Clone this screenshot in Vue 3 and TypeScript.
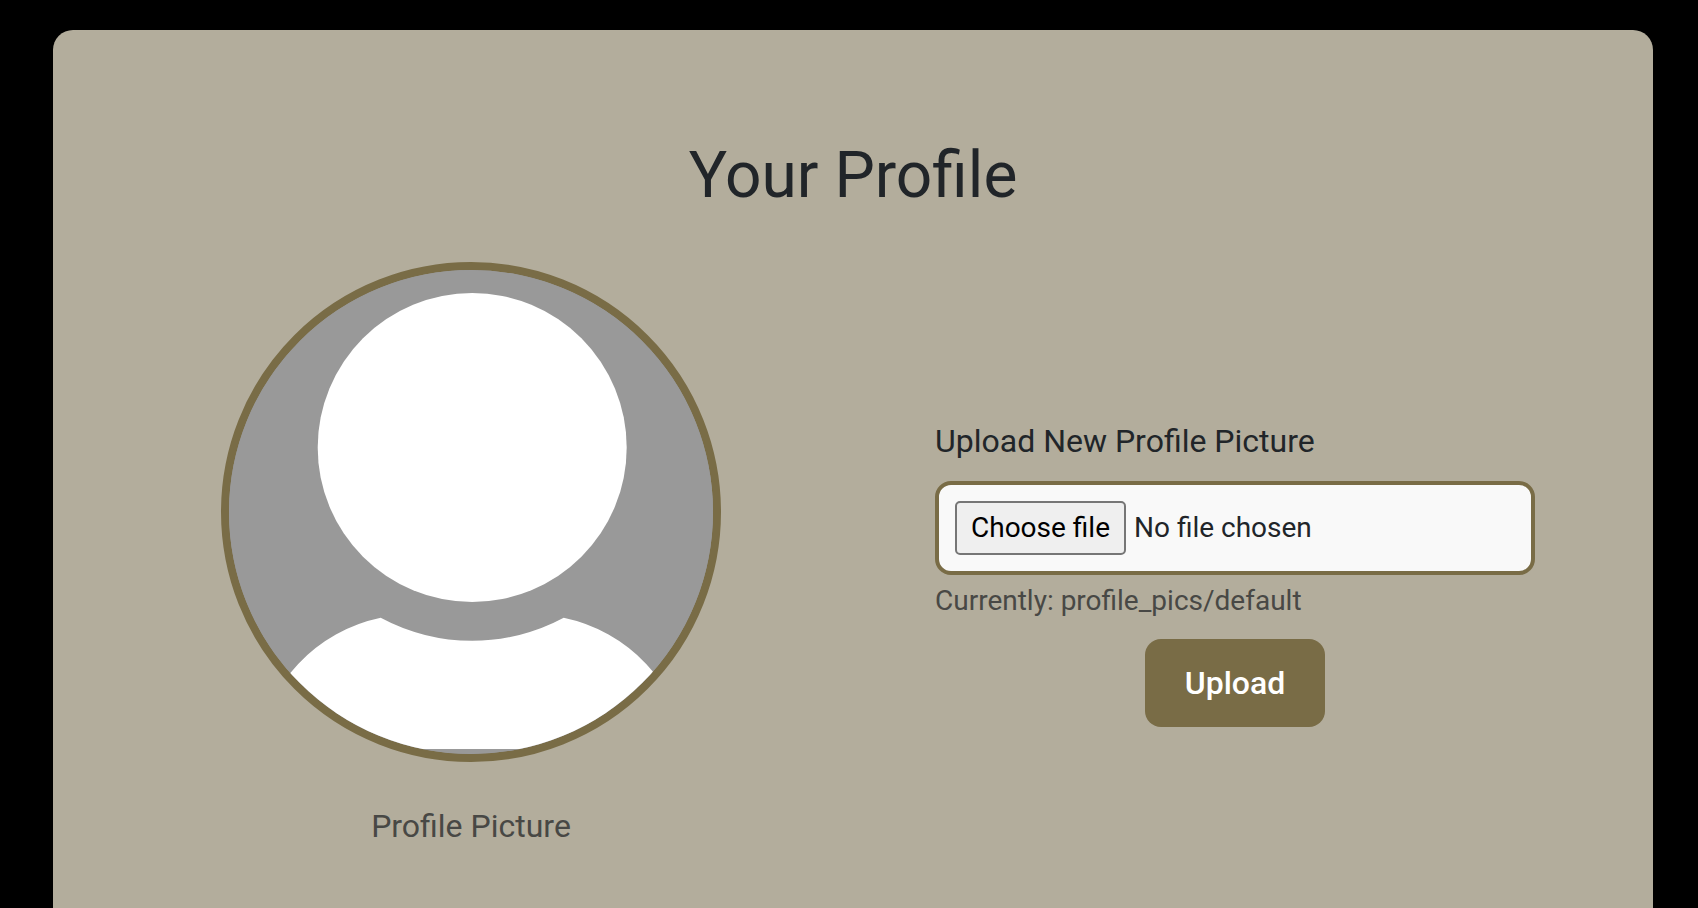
<script setup lang="ts">
import { ref } from 'vue'

const picker = ref<HTMLInputElement | null>(null)
const fileName = ref<string>('')
const current = 'profile_pics/default'

function onChange(event: Event): void {
  const input = event.target as HTMLInputElement
  fileName.value = input.files?.[0]?.name ?? ''
}
</script>

<template>
  <main class="page">
    <section class="card">
      <h1 class="title">Your Profile</h1>
      <div class="columns">
        <figure class="picture">
          <div class="avatar">
            <svg viewBox="0 0 484 484" aria-label="Profile picture">
              <rect width="484" height="484" fill="#999999" />
              <circle cx="243.2" cy="177.5" r="154.5" fill="#ffffff" />
              <path
                d="M151.7 347.8A193.5 193.5 0 0 0 334.7 347.8A157.4 157.4 0 0 1 458.4 479H28A157.4 157.4 0 0 1 151.7 347.8Z"
                fill="#ffffff"
              />
            </svg>
          </div>
          <figcaption class="caption">Profile Picture</figcaption>
        </figure>
        <form class="form" @submit.prevent>
          <label class="label">Upload New Profile Picture</label>
          <div class="file">
            <input ref="picker" class="native" type="file" @change="onChange" />
            <button class="choose" type="button" @click="picker?.click()">Choose file</button>
            <span class="chosen">{{ fileName || 'No file chosen' }}</span>
          </div>
          <p class="current">Currently: {{ current }}</p>
          <button class="upload" type="submit">Upload</button>
        </form>
      </div>
    </section>
  </main>
</template>

<style>
body {
  margin: 0;
  background: #000;
  overflow: hidden;
}
</style>

<style scoped>
.page {
  box-sizing: border-box;
  height: 908px;
  padding: 30px 45px 0 53px;
  overflow: hidden;
  background: #000;
  color: #212529;
  font-family: Roboto, sans-serif;
}
.card {
  box-sizing: border-box;
  width: 1600px;
  height: 1000px;
  padding: 107px 64px 0;
  border-radius: 20px;
  background: #b3ad9c;
}
.title {
  margin: 0 0 48px;
  font-size: 64px;
  font-weight: 400;
  line-height: 77px;
  text-align: center;
}
.columns {
  display: grid;
  grid-template-columns: 708px 600px;
  gap: 110px;
}
.picture {
  display: flex;
  flex-direction: column;
  align-items: center;
  margin: 0;
}
.avatar {
  box-sizing: border-box;
  width: 500px;
  height: 500px;
  border: 8px solid #796c46;
  border-radius: 50%;
  overflow: hidden;
  background: #999;
}
.avatar svg {
  display: block;
  width: 484px;
  height: 484px;
}
.caption {
  margin-top: 40px;
  color: #484845;
  font-size: 32px;
  line-height: 48px;
}
.form {
  display: flex;
  flex-direction: column;
  margin-top: 155px;
}
.label {
  margin-bottom: 16px;
  font-size: 32px;
  line-height: 48px;
}
.file {
  display: flex;
  align-items: center;
  box-sizing: border-box;
  height: 94px;
  padding: 0 16px;
  border: 4px solid #796c46;
  border-radius: 16px;
  background: #f9f9f9;
  font-size: 28px;
}
.native {
  display: none;
}
.choose {
  box-sizing: border-box;
  width: 171px;
  height: 54px;
  margin-right: 8px;
  padding: 0 0 1px;
  border: 2px solid #767676;
  border-radius: 5px;
  background: #efefef;
  color: #000;
  font: inherit;
}
.chosen {
  padding-bottom: 1px;
}
.current {
  margin: 5px 0 17px;
  color: #484845;
  font-size: 28px;
  line-height: 42px;
}
.upload {
  align-self: center;
  width: 180px;
  height: 88px;
  padding: 0;
  border: 0;
  border-radius: 16px;
  background: #796c46;
  color: #fff;
  font: 500 32px/48px Roboto, sans-serif;
}
</style>
